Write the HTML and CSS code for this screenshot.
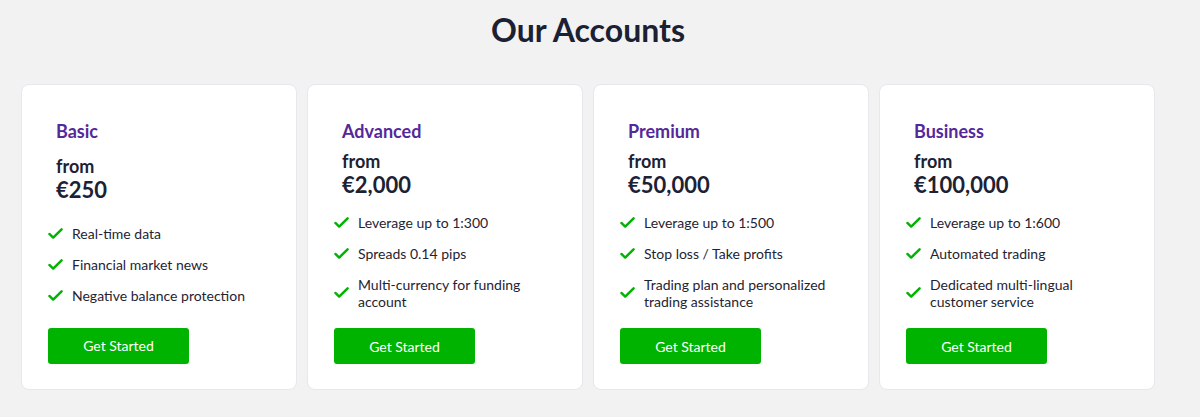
FILE: index.html
```html
<!DOCTYPE html>
<html lang="en">
<head>
<meta charset="utf-8">
<title>Our Accounts</title>
<link rel="stylesheet" href="styles.css">
</head>
<body>
<section class="accounts">
  <h1 class="accounts-title">Our Accounts</h1>
  <div class="cards">
    <div class="card">
      <h2 class="card-name">Basic</h2>
      <div class="price">
        <div class="price-from">from</div>
        <div class="price-value">€250</div>
      </div>
      <ul class="features">
        <li><svg class="check" viewBox="0 0 16 16"><path d="M1.5 8.5l4 3.8 9-8.8"/></svg><span>Real-time data</span></li>
        <li><svg class="check" viewBox="0 0 16 16"><path d="M1.5 8.5l4 3.8 9-8.8"/></svg><span>Financial market news</span></li>
        <li><svg class="check" viewBox="0 0 16 16"><path d="M1.5 8.5l4 3.8 9-8.8"/></svg><span>Negative balance protection</span></li>
      </ul>
      <a class="btn" href="#">Get Started</a>
    </div>
    <div class="card">
      <h2 class="card-name">Advanced</h2>
      <div class="price">
        <div class="price-from">from</div>
        <div class="price-value">€2,000</div>
      </div>
      <ul class="features">
        <li><svg class="check" viewBox="0 0 16 16"><path d="M1.5 8.5l4 3.8 9-8.8"/></svg><span>Leverage up to 1:300</span></li>
        <li><svg class="check" viewBox="0 0 16 16"><path d="M1.5 8.5l4 3.8 9-8.8"/></svg><span>Spreads 0.14 pips</span></li>
        <li><svg class="check" viewBox="0 0 16 16"><path d="M1.5 8.5l4 3.8 9-8.8"/></svg><span>Multi-currency for funding<br>account</span></li>
      </ul>
      <a class="btn" href="#">Get Started</a>
    </div>
    <div class="card">
      <h2 class="card-name">Premium</h2>
      <div class="price">
        <div class="price-from">from</div>
        <div class="price-value">€50,000</div>
      </div>
      <ul class="features">
        <li><svg class="check" viewBox="0 0 16 16"><path d="M1.5 8.5l4 3.8 9-8.8"/></svg><span>Leverage up to 1:500</span></li>
        <li><svg class="check" viewBox="0 0 16 16"><path d="M1.5 8.5l4 3.8 9-8.8"/></svg><span>Stop loss / Take profits</span></li>
        <li><svg class="check" viewBox="0 0 16 16"><path d="M1.5 8.5l4 3.8 9-8.8"/></svg><span>Trading plan and personalized<br>trading assistance</span></li>
      </ul>
      <a class="btn" href="#">Get Started</a>
    </div>
    <div class="card">
      <h2 class="card-name">Business</h2>
      <div class="price">
        <div class="price-from">from</div>
        <div class="price-value">€100,000</div>
      </div>
      <ul class="features">
        <li><svg class="check" viewBox="0 0 16 16"><path d="M1.5 8.5l4 3.8 9-8.8"/></svg><span>Leverage up to 1:600</span></li>
        <li><svg class="check" viewBox="0 0 16 16"><path d="M1.5 8.5l4 3.8 9-8.8"/></svg><span>Automated trading</span></li>
        <li><svg class="check" viewBox="0 0 16 16"><path d="M1.5 8.5l4 3.8 9-8.8"/></svg><span>Dedicated multi-lingual<br>customer service</span></li>
      </ul>
      <a class="btn" href="#">Get Started</a>
    </div>
  </div>
</section>
</body>
</html>
```
FILE: styles.css
```css
* { box-sizing: border-box; }
html, body {
  margin: 0;
  padding: 0;
  background: #f2f2f2;
}
body {
  font-family: "Lato", "Open Sans", sans-serif;
  color: #1c2134;
}
.accounts {
  padding: 11px 45px 0 21px;
}
.accounts-title {
  margin: 0 0 35px;
  text-align: center;
  font-size: 32px;
  line-height: 38px;
  font-weight: 700;
  color: #1b2033;
}
.cards {
  display: grid;
  grid-template-columns: repeat(4, 1fr);
  gap: 10px;
}
.card {
  background: #fff;
  border: 1px solid #e6e8f0;
  border-radius: 8px;
  padding: 34px 26px 25px;
  display: flex;
  flex-direction: column;
  justify-content: space-between;
  align-items: flex-start;
}
.card-name {
  margin: 0;
  padding-left: 8px;
  font-size: 18px;
  line-height: 24px;
  font-weight: 700;
  color: #55289a;
}
.price {
  margin-top: 7.5px;
  padding-left: 8px;
}
.price-from {
  font-size: 18px;
  line-height: 21px;
  font-weight: 700;
}
.price-value {
  font-size: 22px;
  line-height: 25px;
  font-weight: 700;
}
.features {
  list-style: none;
  margin: 17px 0 0;
  padding: 0;
  display: flex;
  flex-direction: column;
  gap: 14px;
}
.features li {
  display: flex;
  align-items: center;
  gap: 9px;
  font-size: 14px;
  line-height: 17px;
  color: #1f2433;
}
.check {
  width: 15px;
  height: 15px;
  flex: none;
  fill: none;
  stroke: #00b300;
  stroke-width: 2.6;
  stroke-linecap: round;
  stroke-linejoin: round;
}
.btn {
  margin-top: 18.5px;
  display: flex;
  align-items: center;
  justify-content: center;
  width: 141px;
  height: 36px;
  background: #00b300;
  border-radius: 3px;
  color: #fff;
  font-size: 14px;
  text-decoration: none;
}
```
